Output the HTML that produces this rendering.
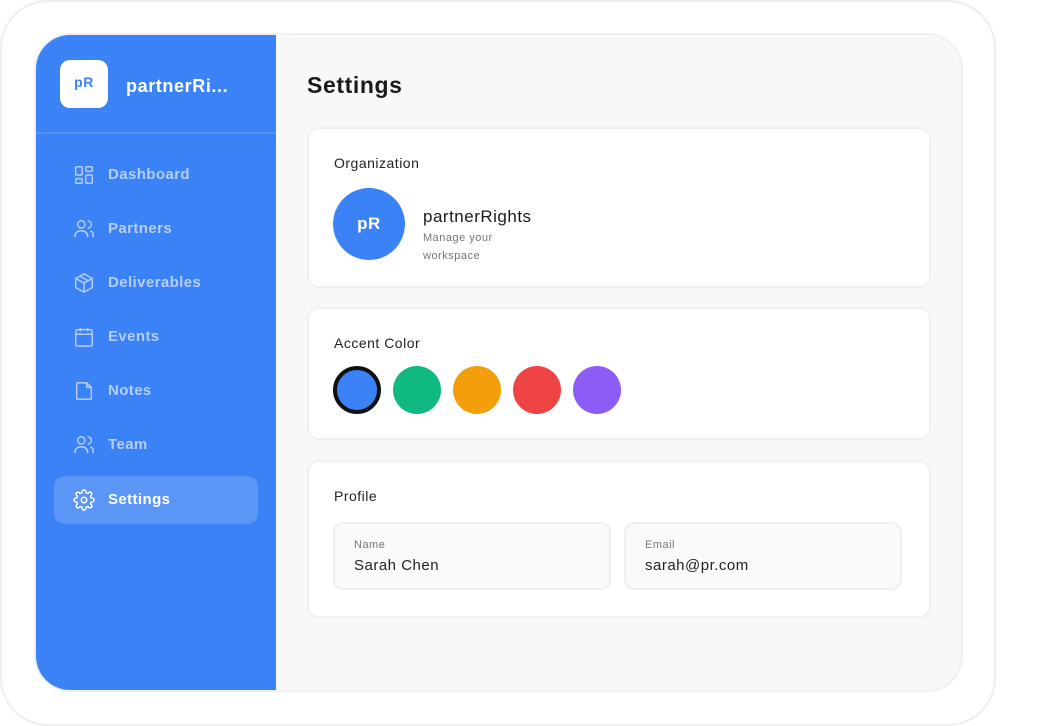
<!DOCTYPE html>
<html><head><style>
*{box-sizing:border-box;margin:0;padding:0}
body{width:1056px;height:726px;background:#fff;font-family:"Liberation Sans",sans-serif;position:relative;overflow:hidden;letter-spacing:.5px}
.outer{position:absolute;left:0;top:0;width:996px;height:726px;border:2px solid #eceef1;border-radius:48px;background:#fff}
.screen{position:absolute;left:34px;top:33px;width:929px;height:659px;border:2px solid #eef0f2;border-radius:36px;background:#f8f8f8;overflow:hidden}
.side{position:absolute;left:0;top:0;width:240px;height:100%;background:#3b82f6}
.logo{position:absolute;left:24px;top:25px;width:48px;height:48px;border-radius:10px;background:#fff;color:#3b82f6;font-weight:bold;font-size:14px;text-align:center;line-height:44px}
.brand{position:absolute;left:90px;top:41px;color:#fff;font-size:18px;font-weight:bold;letter-spacing:.6px}
.hr{position:absolute;left:0;top:97px;width:240px;height:2px;background:#5592f7}
.nav{position:absolute;left:18px;width:204px;height:48px;border-radius:10px;color:#b5cefb;font-size:15px;font-weight:bold;letter-spacing:.4px}
.nav svg{position:absolute;left:19px;top:13px}
.nav span{position:absolute;left:54px;top:15px}
.nav.act{background:#5b96f7;color:#fff}
h1{position:absolute;left:271px;top:37px;font-size:23px;font-weight:bold;color:#1a1a1a;letter-spacing:.6px}
.card{position:absolute;left:271px;width:624px;background:#fff;border:2px solid #eef0f2;border-radius:12px}
.ct{position:absolute;left:25px;font-size:14px;color:#222}
.sw{position:absolute;top:58px;width:48px;height:48px;border-radius:50%}
.field{position:absolute;top:61px;width:278px;height:68px;border:2px solid #eeeff1;border-radius:10px;background:#fafafa}
.field .l{position:absolute;left:19px;top:15px;font-size:11px;color:#777}
.field .v{position:absolute;left:19px;top:33px;font-size:15px;color:#222}
</style></head><body>
<div class="outer"></div>
<div class="screen">
 <div class="side">
  <div class="logo">pR</div>
  <div class="brand">partnerRi...</div>
  <div class="hr"></div>
  <div class="nav" style="top:116px"><svg width="22" height="22" viewBox="0 0 24 24" fill="none" stroke="#b5cefb" stroke-width="1.6"><rect x="3" y="3" width="7" height="9" rx="1"/><rect x="14" y="3" width="7" height="5" rx="1"/><rect x="14" y="12" width="7" height="9" rx="1"/><rect x="3" y="16" width="7" height="5" rx="1"/></svg><span>Dashboard</span></div>
  <div class="nav" style="top:170px"><svg width="22" height="22" viewBox="0 0 24 24" fill="none" stroke="#b5cefb" stroke-width="1.6"><circle cx="9" cy="7" r="4"/><path d="M2 21v-1a6 6 0 0 1 6-6h2a6 6 0 0 1 6 6v1M16 3a4 4 0 0 1 0 8M19 14a5 5 0 0 1 3 5v2"/></svg><span>Partners</span></div>
  <div class="nav" style="top:224px"><svg width="22" height="22" viewBox="0 0 24 24" fill="none" stroke="#b5cefb" stroke-width="1.6"><path d="M12 2l9 5v10l-9 5-9-5V7z"/><path d="M3 7l9 5 9-5M12 12v10M7.5 4.5l9 5"/></svg><span>Deliverables</span></div>
  <div class="nav" style="top:278px"><svg width="22" height="22" viewBox="0 0 24 24" fill="none" stroke="#b5cefb" stroke-width="1.6"><rect x="3" y="4" width="18" height="18" rx="2"/><path d="M3 9h18M8 2v4M16 2v4"/></svg><span>Events</span></div>
  <div class="nav" style="top:332px"><svg width="22" height="22" viewBox="0 0 24 24" fill="none" stroke="#b5cefb" stroke-width="1.6"><path d="M5 3h10l5 5v12a1 1 0 0 1-1 1H5a1 1 0 0 1-1-1V4a1 1 0 0 1 1-1z"/><path d="M15 3v5h5"/></svg><span>Notes</span></div>
  <div class="nav" style="top:386px"><svg width="22" height="22" viewBox="0 0 24 24" fill="none" stroke="#b5cefb" stroke-width="1.6"><circle cx="9" cy="7" r="4"/><path d="M2 21v-1a6 6 0 0 1 6-6h2a6 6 0 0 1 6 6v1M16 3a4 4 0 0 1 0 8M19 14a5 5 0 0 1 3 5v2"/></svg><span>Team</span></div>
  <div class="nav act" style="top:441px"><svg width="22" height="22" viewBox="0 0 24 24" fill="none" stroke="#fff" stroke-width="1.6"><circle cx="12" cy="12" r="3"/><path d="M19.4 15a1.7 1.7 0 0 0 .3 1.8l.1.1a2 2 0 1 1-2.8 2.8l-.1-.1a1.7 1.7 0 0 0-1.8-.3 1.7 1.7 0 0 0-1 1.5V21a2 2 0 1 1-4 0v-.1a1.7 1.7 0 0 0-1.1-1.5 1.7 1.7 0 0 0-1.8.3l-.1.1a2 2 0 1 1-2.8-2.8l.1-.1a1.7 1.7 0 0 0 .3-1.8 1.7 1.7 0 0 0-1.5-1H3a2 2 0 1 1 0-4h.1a1.7 1.7 0 0 0 1.5-1.1 1.7 1.7 0 0 0-.3-1.8l-.1-.1a2 2 0 1 1 2.8-2.8l.1.1a1.7 1.7 0 0 0 1.8.3H9a1.7 1.7 0 0 0 1-1.5V3a2 2 0 1 1 4 0v.1a1.7 1.7 0 0 0 1 1.5 1.7 1.7 0 0 0 1.8-.3l.1-.1a2 2 0 1 1 2.8 2.8l-.1.1a1.7 1.7 0 0 0-.3 1.8V9a1.7 1.7 0 0 0 1.5 1H21a2 2 0 1 1 0 4h-.1a1.7 1.7 0 0 0-1.5 1z"/></svg><span>Settings</span></div>
 </div>
 <h1>Settings</h1>
 <div class="card" style="top:92px;height:161px">
  <div class="ct" style="top:26px">Organization</div>
  <div style="position:absolute;left:24px;top:59px;width:72px;height:72px;border-radius:50%;background:#3b82f6;color:#fff;font-weight:bold;font-size:17px;text-align:center;line-height:72px">pR</div>
  <div style="position:absolute;left:114px;top:78px;font-size:17px;color:#1a1a1a">partnerRights</div>
  <div style="position:absolute;left:114px;top:100px;font-size:11px;color:#777;line-height:18px">Manage your<br>workspace</div>
 </div>
 <div class="card" style="top:272px;height:133px">
  <div class="ct" style="top:26px">Accent Color</div>
  <div class="sw" style="left:24px;top:57px;background:#3b82f6;border:4px solid #111"></div>
  <div class="sw" style="left:84px;top:57px;background:#10b981"></div>
  <div class="sw" style="left:144px;top:57px;background:#f59e0b"></div>
  <div class="sw" style="left:204px;top:57px;background:#ef4444"></div>
  <div class="sw" style="left:264px;top:57px;background:#8b5cf6"></div>
 </div>
 <div class="card" style="top:425px;height:158px">
  <div class="ct" style="top:26px">Profile</div>
  <div class="field" style="left:24px;top:60px"><div class="l">Name</div><div class="v">Sarah Chen</div></div>
  <div class="field" style="left:315px;top:60px"><div class="l">Email</div><div class="v">sarah@pr.com</div></div>
 </div>
</div>
</body></html>
